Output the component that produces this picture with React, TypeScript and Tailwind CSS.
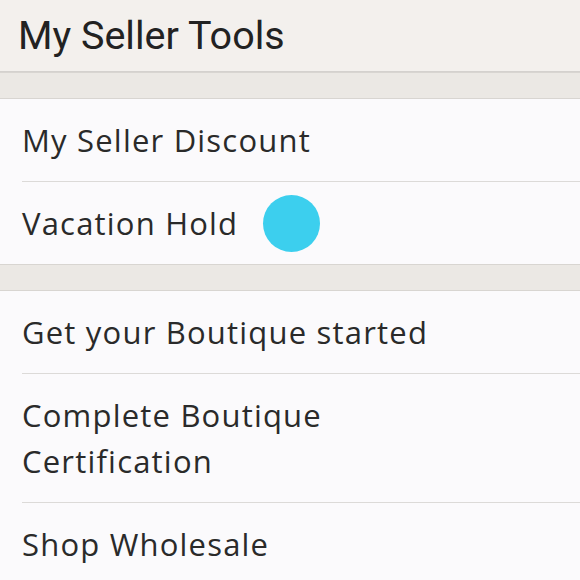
import React from 'react';

interface ToolRow {
  label: React.ReactNode;
  dot?: boolean;
}

const firstGroup: ToolRow[] = [{ label: 'My Seller Discount' }, { label: 'Vacation Hold', dot: true }];

const secondGroup: ToolRow[] = [
  { label: 'Get your Boutique started' },
  {
    label: (
      <>
        Complete Boutique
        <br />
        Certification
      </>
    ),
  },
  { label: 'Shop Wholesale' },
];

function Band() {
  return <div className="h-[27px] border-y border-[#d8d5d1] bg-[#ebe8e4]" />;
}

function Group({ rows }: { rows: ToolRow[] }) {
  return (
    <div className="bg-[#fbfafc]">
      {rows.map((row, i) => (
        <div key={i} className="pl-[22px]">
          <div className={`${i > 0 ? 'border-t border-[#dcdad8]' : ''} flex items-center py-[18px]`}>
            <span className="text-[31px] leading-[46px] tracking-[1.2px] text-[#2a2a2a]">{row.label}</span>
            {row.dot && <span className="-my-[6px] ml-[25px] h-[57px] w-[57px] shrink-0 rounded-full bg-[#3ccfee]" />}
          </div>
        </div>
      ))}
    </div>
  );
}

export default function App() {
  return (
    <div className="h-[580px] w-[580px] overflow-hidden bg-[#fbfafc]" style={{ fontFamily: '"Open Sans", Lato, sans-serif' }}>
      <div className="flex h-[72px] items-center border-b border-[#d4d1ce] bg-[#f3f0ed] pl-[18px]">
        <h1 className="text-[39.5px] leading-none text-[#222222]" style={{ fontFamily: 'Roboto, sans-serif' }}>
          My Seller Tools
        </h1>
      </div>
      <Band />
      <Group rows={firstGroup} />
      <Band />
      <div className="border-b border-[#dcdad8]">
        <Group rows={secondGroup} />
      </div>
    </div>
  );
}
